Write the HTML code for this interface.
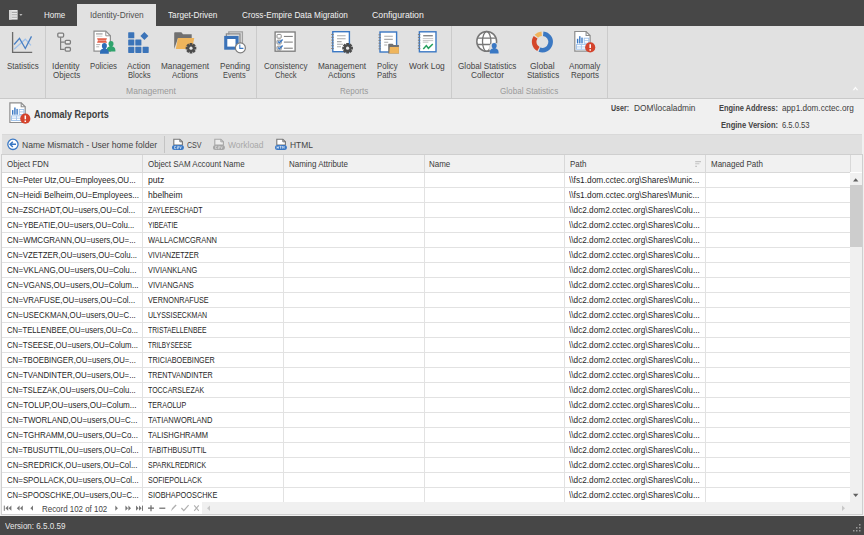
<!DOCTYPE html>
<html><head><meta charset="utf-8">
<style>
html,body{margin:0;padding:0}
body{width:864px;height:535px;position:relative;overflow:hidden;background:#f0f0f0;font-family:"Liberation Sans",sans-serif}
.a{position:absolute}
.t{position:absolute;white-space:pre;line-height:12px;transform-origin:0 50%}
svg{position:absolute;overflow:visible}
</style></head><body>
<!-- top bar -->
<div class="a" style="left:0;top:0;width:864px;height:26px;background:#474747"></div>
<div class="a" style="left:77px;top:4px;width:79px;height:22px;background:#e1e1e1"></div>
<!-- ribbon -->
<div class="a" style="left:0;top:26px;width:864px;height:72px;background:#e1e1e1"></div>
<div class="a" style="left:0;top:98px;width:864px;height:1px;background:#c9c9c9"></div>
<div class="a" style="left:45px;top:26px;width:1px;height:72px;background:#cbcbcb"></div>
<div class="a" style="left:256px;top:26px;width:1px;height:72px;background:#cbcbcb"></div>
<div class="a" style="left:451px;top:26px;width:1px;height:72px;background:#cbcbcb"></div>
<div class="a" style="left:607px;top:26px;width:1px;height:72px;background:#cbcbcb"></div>
<!-- header panel -->
<div class="a" style="left:0;top:99px;width:864px;height:35px;background:#f0f0f0"></div>
<!-- toolbar -->
<div class="a" style="left:2px;top:134px;width:860px;height:20px;background:#e0e0e0"></div>
<div class="a" style="left:2px;top:134px;width:860px;height:1px;background:#d9d9d9"></div>
<div class="a" style="left:164px;top:136px;width:1px;height:17px;background:#c4c4c4"></div>
<!-- grid -->
<div class="a" style="left:1px;top:154px;width:862px;height:361px;background:#ffffff;box-sizing:border-box;border:1px solid #cfcfcf"></div>
<div class="a" style="left:2px;top:155px;width:848px;height:17px;background:#f1f1f1"></div>
<div class="a" style="left:850px;top:155px;width:12px;height:17px;background:#f1f1f1"></div>
<div class="a" style="left:2px;top:172px;width:848px;height:1px;background:#d8d8d8"></div>
<div id="rowlines"></div>
<div class="a" style="left:142px;top:155px;width:1px;height:17px;background:#d8d8d8"></div>
<div class="a" style="left:142px;top:173px;width:1px;height:329px;background:#e2e2e2"></div>
<div class="a" style="left:283px;top:155px;width:1px;height:17px;background:#d8d8d8"></div>
<div class="a" style="left:283px;top:173px;width:1px;height:329px;background:#e2e2e2"></div>
<div class="a" style="left:424px;top:155px;width:1px;height:17px;background:#d8d8d8"></div>
<div class="a" style="left:424px;top:173px;width:1px;height:329px;background:#e2e2e2"></div>
<div class="a" style="left:564px;top:155px;width:1px;height:17px;background:#d8d8d8"></div>
<div class="a" style="left:564px;top:173px;width:1px;height:329px;background:#e2e2e2"></div>
<div class="a" style="left:705px;top:155px;width:1px;height:17px;background:#d8d8d8"></div>
<div class="a" style="left:705px;top:173px;width:1px;height:329px;background:#e2e2e2"></div>
<div class="a" style="left:850px;top:155px;width:1px;height:17px;background:#d8d8d8"></div>
<div class="a" style="left:2px;top:187px;width:848px;height:1px;background:#e2e2e2"></div>
<div class="a" style="left:2px;top:202px;width:848px;height:1px;background:#e2e2e2"></div>
<div class="a" style="left:2px;top:217px;width:848px;height:1px;background:#e2e2e2"></div>
<div class="a" style="left:2px;top:232px;width:848px;height:1px;background:#e2e2e2"></div>
<div class="a" style="left:2px;top:247px;width:848px;height:1px;background:#e2e2e2"></div>
<div class="a" style="left:2px;top:262px;width:848px;height:1px;background:#e2e2e2"></div>
<div class="a" style="left:2px;top:277px;width:848px;height:1px;background:#e2e2e2"></div>
<div class="a" style="left:2px;top:292px;width:848px;height:1px;background:#e2e2e2"></div>
<div class="a" style="left:2px;top:307px;width:848px;height:1px;background:#e2e2e2"></div>
<div class="a" style="left:2px;top:322px;width:848px;height:1px;background:#e2e2e2"></div>
<div class="a" style="left:2px;top:337px;width:848px;height:1px;background:#e2e2e2"></div>
<div class="a" style="left:2px;top:352px;width:848px;height:1px;background:#e2e2e2"></div>
<div class="a" style="left:2px;top:367px;width:848px;height:1px;background:#e2e2e2"></div>
<div class="a" style="left:2px;top:382px;width:848px;height:1px;background:#e2e2e2"></div>
<div class="a" style="left:2px;top:397px;width:848px;height:1px;background:#e2e2e2"></div>
<div class="a" style="left:2px;top:412px;width:848px;height:1px;background:#e2e2e2"></div>
<div class="a" style="left:2px;top:427px;width:848px;height:1px;background:#e2e2e2"></div>
<div class="a" style="left:2px;top:442px;width:848px;height:1px;background:#e2e2e2"></div>
<div class="a" style="left:2px;top:457px;width:848px;height:1px;background:#e2e2e2"></div>
<div class="a" style="left:2px;top:472px;width:848px;height:1px;background:#e2e2e2"></div>
<div class="a" style="left:2px;top:487px;width:848px;height:1px;background:#e2e2e2"></div>
<!-- scrollbar -->
<div class="a" style="left:850px;top:173px;width:12px;height:329px;background:#f0f0f0"></div>
<div class="a" style="left:850px;top:185px;width:12px;height:62px;background:#cdcdcd"></div>
<!-- navigator -->
<div class="a" style="left:2px;top:502px;width:200px;height:12px;background:#ffffff"></div>
<div class="a" style="left:202px;top:502px;width:660px;height:12px;background:#f0f0f0"></div>
<!-- status bar -->
<div class="a" style="left:0;top:516px;width:864px;height:19px;background:#474747"></div>
<svg width="864" height="535" viewBox="0 0 864 535" style="left:0;top:0">
<defs>
<g id="gear"><path d="M-1.37 -3.65 L-1.41 -5.32 L1.41 -5.32 L1.37 -3.65 L1.61 -3.55 L2.76 -4.76 L4.76 -2.76 L3.55 -1.61 L3.65 -1.37 L5.32 -1.41 L5.32 1.41 L3.65 1.37 L3.55 1.61 L4.76 2.76 L2.76 4.76 L1.61 3.55 L1.37 3.65 L1.41 5.32 L-1.41 5.32 L-1.37 3.65 L-1.61 3.55 L-2.76 4.76 L-4.76 2.76 L-3.55 1.61 L-3.65 1.37 L-5.32 1.41 L-5.32 -1.41 L-3.65 -1.37 L-3.55 -1.61 L-4.76 -2.76 L-2.76 -4.76 L-1.61 -3.55Z" fill="#4b4b4b"/><circle r="1.6" fill="#e8e8e8"/></g>
<g id="person"><ellipse cx="0" cy="-3.3" rx="2.5" ry="2.8"/><path d="M-4.4 4.6V3.2C-4.4 .9-2.8 -.1-1.3 -.4V-1.2H1.3V-.4C2.8 -.1 4.4 .9 4.4 3.2V4.6z"/></g>
<g id="anom">
 <path d="M574.8 31.5h11.3l4 4v15.7h-15.3z" fill="#fff" stroke="#8c8c8c" stroke-width="1.2"/>
 <path d="M586.1 31.5v4h4" fill="none" stroke="#8c8c8c" stroke-width="1.1"/>
 <rect x="576.9" y="38.8" width="1.4" height="4.6" fill="#3a78c4"/>
 <rect x="579.1" y="36.2" width="1.4" height="7.2" fill="#3a78c4"/>
 <rect x="581.3" y="37.6" width="1.4" height="5.8" fill="#3a78c4"/>
 <rect x="584.2" y="38.2" width="4.6" height="5" fill="none" stroke="#9cc0ea" stroke-width="0.9"/>
 <path d="M584.2 40.6h4.6" stroke="#9cc0ea" stroke-width="0.8"/>
 <rect x="576.4" y="44.6" width="10" height="4.6" fill="none" stroke="#9cc0ea" stroke-width="0.9"/>
 <path d="M576.4 46.9h10M581.4 44.6v4.6" stroke="#9cc0ea" stroke-width="0.8"/>
 <circle cx="590.2" cy="47.4" r="5.1" fill="#d4432c"/>
 <path d="M590.2 44.2v3.8" stroke="#fff" stroke-width="1.5"/>
 <rect x="589.45" y="49.2" width="1.5" height="1.5" fill="#fff"/>
</g>
<g id="nbook">
 <rect x="0" y="0" width="16.6" height="20" fill="#fff" stroke="#3b78c4" stroke-width="1.4"/>
 <path d="M-1.5 2.8h2.4M-1.5 5.6h2.4M-1.5 8.4h2.4M-1.5 11.2h2.4M-1.5 14h2.4M-1.5 16.8h2.4" stroke="#7c7c7c" stroke-width="1"/>
</g>
<g id="csvdoc">
 <path d="M0.6 0.6h6l2.6 2.6v3.2h-8.6z" fill="#fff" stroke="#777" stroke-width="1.1"/>
 <path d="M6.6 0.6v2.6h2.6" fill="none" stroke="#777" stroke-width="1"/>
</g>
</defs>

<!-- app menu -->
<rect x="9" y="10" width="8.6" height="9.6" fill="#e8e8e8"/>
<rect x="9" y="10" width="2.6" height="9.6" fill="#d6d6d6"/>
<path d="M11.8 12.4h5.6M11.8 14.8h5.6M11.8 17.2h5.6" stroke="#a9a9a9" stroke-width="1.1"/>
<path d="M19.3 14h3.2l-1.6 2z" fill="#b9b9b9"/>

<!-- Statistics -->
<path d="M12.6 32v20.4h19.6" fill="none" stroke="#6b6b6b" stroke-width="1.3"/>
<polyline points="14.1,49.3 25.3,39.2 31,45.4" fill="none" stroke="#9fc2ec" stroke-width="1.2"/>
<polyline points="14.1,44.5 19.5,38.4 25.3,48.5 31.5,36.4" fill="none" stroke="#4a80c4" stroke-width="1.3"/>

<!-- Identity Objects -->
<path d="M60.6 37.2V49.3H64.6M60.6 42.1H64.6" fill="none" stroke="#7d7d7d" stroke-width="1.2"/>
<rect x="57.8" y="33.1" width="5.8" height="4" rx="1" fill="#eaeaea" stroke="#7d7d7d" stroke-width="1.3"/>
<rect x="65.2" y="40.3" width="5.2" height="3.7" rx="1" fill="#eaeaea" stroke="#7d7d7d" stroke-width="1.3"/>
<rect x="65.2" y="47.5" width="5.2" height="3.6" rx="1" fill="#eaeaea" stroke="#7d7d7d" stroke-width="1.3"/>

<!-- Policies -->
<path d="M94 31.2h11.8l4.6 4.6v15.4h-16.4z" fill="#fff" stroke="#8f8f8f" stroke-width="1.2"/>
<path d="M105.8 31.2v4.6h4.6" fill="none" stroke="#8f8f8f" stroke-width="1"/>
<path d="M96 33.9h6.6" stroke="#a6a6a6" stroke-width="1.3"/>
<path d="M96.4 36.2h6" stroke="#c4c4c4" stroke-width="0.8"/>
<path d="M97 38.2h10l-1 2.2 1 2.3h-10l1-2.3z" fill="#e3604a"/>
<path d="M98.2 40.4h7.6" stroke="#f2aa9c" stroke-width="0.9"/>
<path d="M96.2 44.6h4M96.2 46.8h3" stroke="#a8a8a8" stroke-width="0.9"/>
<use href="#person" transform="translate(111,47)" fill="#2fa36d"/>
<use href="#person" transform="translate(104.4,49.2)" fill="#2e6db7"/>

<!-- Action Blocks -->
<g fill="#3b74b9">
<rect x="128.2" y="32.2" width="6.1" height="6.1" rx="0.6"/>
<rect x="128.2" y="39.5" width="6.1" height="6.1" rx="0.6"/>
<rect x="135.3" y="39.5" width="6.1" height="6.1" rx="0.6"/>
<rect x="128.2" y="46.8" width="6.1" height="6.1" rx="0.6"/>
<rect x="135.3" y="46.8" width="6.1" height="6.1" rx="0.6"/>
<rect x="142.6" y="46.8" width="6.1" height="6.1" rx="0.6"/>
<path d="M144.4 31.9l4 4-4 4-4-4z"/>
</g>

<!-- Management Actions (folder + gear) -->
<path d="M174.2 49V33.3c0-.6.4-1.1 1-1.1h6.2l1.6 2.1h8.7v4H178z" fill="#707070"/>
<path d="M177.9 38h16.4l-2.3 11h-16.2z" fill="#eeb45b"/>
<use href="#gear" transform="translate(191,48.2)"/>

<!-- Pending Events -->
<path d="M228.8 34.4V31.8h13.6V44.2" fill="none" stroke="#a0a0a0" stroke-width="1.3"/>
<path d="M226.4 36.4V33.9h13.6V46.2" fill="none" stroke="#8c8c8c" stroke-width="1.3"/>
<rect x="224.2" y="35.9" width="14.4" height="13.8" fill="#3a72b8"/>
<rect x="227.3" y="39" width="8.2" height="7.6" fill="#fff"/>
<circle cx="240.4" cy="47.9" r="5" fill="#fff" stroke="#7c7c7c" stroke-width="1.2"/>
<path d="M239.8 44.5v3.9h3.6" fill="none" stroke="#3a78c4" stroke-width="1.1"/>
<!-- Consistency Check -->
<rect x="275.1" y="32" width="20" height="19.2" fill="#fff" stroke="#7b7b7b" stroke-width="1.3"/>
<rect x="277" y="34.4" width="4.2" height="3.8" rx="0.8" fill="#fff" stroke="#8a8a8a" stroke-width="1"/>
<rect x="277" y="40.2" width="4.2" height="3.8" rx="0.8" fill="#fff" stroke="#8a8a8a" stroke-width="1"/>
<rect x="277" y="46.2" width="4.2" height="3.8" rx="0.8" fill="#fff" stroke="#8a8a8a" stroke-width="1"/>
<path d="M278 41.4l1.4 1.4 3.2-3.4M278 47.4l1.4 1.4 3.2-3.4" fill="none" stroke="#3a78c4" stroke-width="1.4"/>
<path d="M283.9 36.4h8.9M283.9 42.1h8.9M283.9 48.2h8.9" stroke="#777" stroke-width="1"/>

<!-- Management Actions (notebook + gear) -->
<use href="#nbook" transform="translate(332.8,31.7)"/>
<path d="M337 35.7h8.6M337 38.8h8.6M337 41.6h4.6M337 44.2h6M337 46.8h4" stroke="#a9a9a9" stroke-width="1.1"/>
<use href="#gear" transform="translate(347.6,48.2)"/>

<!-- Policy Paths -->
<use href="#nbook" transform="translate(380,32)"/>
<path d="M384.2 36.3h8.6M384.2 39.4h8.6M384.2 42.3h4M384.2 45h3" stroke="#a9a9a9" stroke-width="1.1"/>
<path d="M388.2 53.6V44.6c0-.5.3-.9.8-.9h3.6l1.1 1.3h5.2v8.6z" fill="#717171"/>
<path d="M389.8 47h9.1v6.6h-9.6z" fill="#efb55c"/>

<!-- Work Log -->
<use href="#nbook" transform="translate(419.4,31.8)"/>
<path d="M423.2 35.7h9.6" stroke="#888" stroke-width="1.4"/>
<path d="M422.8 38.6h10.4M422.8 40.6h10.4M422.8 42.2h5.6" stroke="#bdbdbd" stroke-width="0.9"/>
<polyline points="423.3,48.9 426.3,45.6 428.4,48.3 432.8,44" fill="none" stroke="#25a05e" stroke-width="1.5"/>

<!-- Global Statistics Collector -->
<circle cx="486.7" cy="41.4" r="9.9" fill="#fff" stroke="#777" stroke-width="1.5"/>
<ellipse cx="486.7" cy="41.4" rx="4.2" ry="9.9" fill="none" stroke="#777" stroke-width="1.3"/>
<path d="M477.6 38.2h18.2M477.6 44.5h18.2" stroke="#777" stroke-width="1.3"/>
<circle cx="494.2" cy="47.8" r="5.2" fill="#e1e1e1"/>
<use href="#person" transform="translate(494.2,49)" fill="#3a78c4"/>

<!-- Global Statistics donut -->
<g fill="none" stroke-width="4.6">
<path d="M543.2 33.7 A8.25 8.25 0 1 1 539.4 49.6" stroke="#3b78c2"/>
<path d="M538.4 49.1 A8.25 8.25 0 0 1 535.6 37.2" stroke="#d4472a"/>
<path d="M536.3 36.3 A8.25 8.25 0 0 1 541.7 33.7" stroke="#f0b45c"/>
</g>

<!-- Anomaly Reports -->
<use href="#anom"/>
<use href="#anom" transform="translate(-564.9,71.3)"/>

<!-- collapse ribbon -->
<path d="M852.6 90.2l2.85-3.6 2.85 3.6h-1.6l-1.25-1.6-1.25 1.6z" fill="#fbfbfb"/>

<!-- toolbar back -->
<circle cx="12.95" cy="144.35" r="5.15" fill="#fff" stroke="#3a78c4" stroke-width="1.3"/>
<path d="M16 144.35H10.2M12.8 141.7l-2.7 2.65 2.7 2.65" fill="none" stroke="#3a78c4" stroke-width="1.5"/>
<!-- CSV -->
<use href="#csvdoc" transform="translate(173.2,138.6)"/>
<rect x="172" y="145.1" width="11.9" height="5" rx="2.5" fill="#3a78c4"/>
<path d="M174.6 146.3h1.6M174.6 146.3v2.4h1.6M177.2 146.3h1.4v1.2h-1.4v1.2h1.4M179.7 146.3l.8 2.4.8-2.4" fill="none" stroke="#fff" stroke-width="0.6"/>
<!-- Workload (disabled) -->
<path d="M214.8 139.2h6l2.6 2.6v3.2h-8.6z" fill="#ececec" stroke="#a8a8a8" stroke-width="1.1"/>
<path d="M220.8 139.2v2.6h2.6" fill="none" stroke="#a8a8a8" stroke-width="1"/>
<rect x="213" y="145.1" width="11.9" height="5" rx="2.5" fill="#a6a6a6"/>
<path d="M215.6 146.3h1.6M215.6 146.3v2.4h1.6M218.2 146.3h1.4v1.2h-1.4v1.2h1.4M220.7 146.3l.8 2.4.8-2.4" fill="none" stroke="#e8e8e8" stroke-width="0.6"/>
<!-- HTML -->
<use href="#csvdoc" transform="translate(276.2,138.6)"/>
<rect x="275" y="145.1" width="11.9" height="5" rx="2.5" fill="#3a78c4"/>
<path d="M277 146.3v2.4M277 147.5h1.4M278.4 146.3v2.4M279.5 146.3h2M280.5 146.3v2.4M282.3 148.7v-2.4l.9 1.2.9-1.2v2.4" fill="none" stroke="#fff" stroke-width="0.6"/>

<!-- filter icon -->
<path d="M695.2 161.6h5.8M695.2 163.8h4.2M695.2 166.4h1.8" stroke="#c4c4c4" stroke-width="1.1"/>

<!-- scroll arrows -->
<path d="M853 181.5h5.4l-2.7-3.3z" fill="#606060"/>
<path d="M853 493.8h5.4l-2.7 3.3z" fill="#606060"/>
<path d="M210 505.5v5.4l-3-2.7z" fill="#c8c8c8"/>
<path d="M842 505.5v5.4l3-2.7z" fill="#c8c8c8"/>

<!-- navigator icons -->
<g fill="#777">
<rect x="3.8" y="505.6" width="1" height="5.2"/>
<path d="M8.2 505.6v5.2l-2.8-2.6z M11.4 505.6v5.2l-2.8-2.6z"/>
<path d="M19.6 505.6v5.2l-2.8-2.6z M22.8 505.6v5.2l-2.8-2.6z"/>
<path d="M33 505.6v5.2l-2.6-2.6z"/>
<path d="M115.3 505.6v5.2l2.6-2.6z"/>
<path d="M125.4 505.6v5.2l2.6-2.6z M128.4 505.6v5.2l2.6-2.6z"/>
<path d="M136 505.6v5.2l2.6-2.6z M139 505.6v5.2l2.6-2.6z"/>
<rect x="142" y="505.6" width="1" height="5.2"/>
</g>
<path d="M148 508.2h6M151 505.2v6" stroke="#6a6a6a" stroke-width="1.2"/>
<path d="M159.3 508.2h6" stroke="#6a6a6a" stroke-width="1.2"/>
<path d="M171 511.2l1-3 3.6-3.6 1 1-3.6 3.6z" fill="#b0b0b0"/>
<path d="M181.4 508l2.4 2.6 4.8-5.4" fill="none" stroke="#b0b0b0" stroke-width="1.2"/>
<path d="M194.2 505.4l4.6 5.4M198.8 505.4l-4.6 5.4" stroke="#b0b0b0" stroke-width="1.1"/>

<!-- resize grip -->
<g fill="#9a9a9a">
<rect x="859" y="524" width="1.5" height="1.5"/>
<rect x="856" y="527" width="1.5" height="1.5"/><rect x="859" y="527" width="1.5" height="1.5"/>
<rect x="853" y="530" width="1.5" height="1.5"/><rect x="856" y="530" width="1.5" height="1.5"/><rect x="859" y="530" width="1.5" height="1.5"/>
</g>
</svg>

<div class="t" style="left:43.70px;top:8.90px;font-size:9px;color:#f2f2f2;transform:scaleX(0.8869)">Home</div>
<div class="t" style="left:89.60px;top:8.90px;font-size:9px;color:#505050;transform:scaleX(0.9254)">Identity-Driven</div>
<div class="t" style="left:168.00px;top:8.90px;font-size:9px;color:#f2f2f2;transform:scaleX(0.9143)">Target-Driven</div>
<div class="t" style="left:241.60px;top:8.90px;font-size:9px;color:#f2f2f2;transform:scaleX(0.9117)">Cross-Empire Data Migration</div>
<div class="t" style="left:371.70px;top:8.90px;font-size:9px;color:#f2f2f2;transform:scaleX(0.9674)">Configuration</div>
<div class="t" style="left:6.60px;top:59.80px;font-size:9px;color:#454545;transform:scaleX(0.8830)">Statistics</div>
<div class="t" style="left:52.40px;top:59.80px;font-size:9px;color:#454545;transform:scaleX(0.9507)">Identity</div>
<div class="t" style="left:52.60px;top:69.30px;font-size:9px;color:#454545;transform:scaleX(0.8913)">Objects</div>
<div class="t" style="left:90.30px;top:59.80px;font-size:9px;color:#454545;transform:scaleX(0.8705)">Policies</div>
<div class="t" style="left:127.30px;top:59.80px;font-size:9px;color:#454545;transform:scaleX(0.9274)">Action</div>
<div class="t" style="left:127.60px;top:69.30px;font-size:9px;color:#454545;transform:scaleX(0.8523)">Blocks</div>
<div class="t" style="left:161.00px;top:59.80px;font-size:9px;color:#454545;transform:scaleX(0.9135)">Management</div>
<div class="t" style="left:171.90px;top:69.30px;font-size:9px;color:#454545;transform:scaleX(0.8843)">Actions</div>
<div class="t" style="left:219.70px;top:59.80px;font-size:9px;color:#454545;transform:scaleX(0.9082)">Pending</div>
<div class="t" style="left:223.40px;top:69.30px;font-size:9px;color:#454545;transform:scaleX(0.8214)">Events</div>
<div class="t" style="left:263.90px;top:59.80px;font-size:9px;color:#454545;transform:scaleX(0.8872)">Consistency</div>
<div class="t" style="left:274.80px;top:69.30px;font-size:9px;color:#454545;transform:scaleX(0.8426)">Check</div>
<div class="t" style="left:317.60px;top:59.80px;font-size:9px;color:#454545;transform:scaleX(0.9154)">Management</div>
<div class="t" style="left:328.00px;top:69.30px;font-size:9px;color:#454545;transform:scaleX(0.9148)">Actions</div>
<div class="t" style="left:376.90px;top:59.80px;font-size:9px;color:#454545;transform:scaleX(0.8578)">Policy</div>
<div class="t" style="left:377.30px;top:69.30px;font-size:9px;color:#454545;transform:scaleX(0.8559)">Paths</div>
<div class="t" style="left:408.60px;top:59.80px;font-size:9px;color:#454545;transform:scaleX(0.9333)">Work Log</div>
<div class="t" style="left:458.30px;top:59.80px;font-size:9px;color:#454545;transform:scaleX(0.9050)">Global Statistics</div>
<div class="t" style="left:471.00px;top:69.30px;font-size:9px;color:#454545;transform:scaleX(0.9292)">Collector</div>
<div class="t" style="left:530.00px;top:59.80px;font-size:9px;color:#454545;transform:scaleX(0.9456)">Global</div>
<div class="t" style="left:526.50px;top:69.30px;font-size:9px;color:#454545;transform:scaleX(0.8941)">Statistics</div>
<div class="t" style="left:569.00px;top:59.80px;font-size:9px;color:#454545;transform:scaleX(0.8967)">Anomaly</div>
<div class="t" style="left:570.60px;top:69.30px;font-size:9px;color:#454545;transform:scaleX(0.8916)">Reports</div>
<div class="t" style="left:126.00px;top:84.50px;font-size:9px;color:#9a9a9a;transform:scaleX(0.9515)">Management</div>
<div class="t" style="left:339.80px;top:84.80px;font-size:9px;color:#9a9a9a;transform:scaleX(0.8948)">Reports</div>
<div class="t" style="left:499.80px;top:84.70px;font-size:9px;color:#9a9a9a;transform:scaleX(0.9019)">Global Statistics</div>
<div class="t" style="left:33.70px;top:108.00px;font-size:11px;color:#3c3c3c;transform:scaleX(0.8202);font-weight:700">Anomaly Reports</div>
<div class="t" style="left:611.00px;top:101.50px;font-size:9px;color:#444;transform:scaleX(0.7821);font-weight:700">User:</div>
<div class="t" style="left:633.60px;top:101.50px;font-size:9px;color:#3d3d3d;transform:scaleX(0.9229)">DOM\localadmin</div>
<div class="t" style="left:718.90px;top:101.50px;font-size:9px;color:#444;transform:scaleX(0.8274);font-weight:700">Engine Address:</div>
<div class="t" style="left:782.00px;top:101.50px;font-size:9px;color:#3d3d3d;transform:scaleX(0.9083)">app1.dom.cctec.org</div>
<div class="t" style="left:720.70px;top:118.80px;font-size:9px;color:#444;transform:scaleX(0.8395);font-weight:700">Engine Version:</div>
<div class="t" style="left:782.00px;top:118.80px;font-size:9px;color:#3d3d3d;transform:scaleX(0.8484)">6.5.0.53</div>
<div class="t" style="left:21.90px;top:139.30px;font-size:9.5px;color:#444;transform:scaleX(0.9004)">Name Mismatch - User home folder</div>
<div class="t" style="left:186.90px;top:139.30px;font-size:9.5px;color:#444;transform:scaleX(0.7469)">CSV</div>
<div class="t" style="left:227.50px;top:139.30px;font-size:9.5px;color:#a8a8a8;transform:scaleX(0.8885)">Workload</div>
<div class="t" style="left:289.60px;top:139.30px;font-size:9.5px;color:#444;transform:scaleX(0.8850)">HTML</div>
<div class="t" style="left:6.60px;top:157.80px;font-size:9px;color:#3a3a3a;transform:scaleX(0.8860)">Object FDN</div>
<div class="t" style="left:147.80px;top:157.80px;font-size:9px;color:#3a3a3a;transform:scaleX(0.8860)">Object SAM Account Name</div>
<div class="t" style="left:288.50px;top:157.80px;font-size:9px;color:#3a3a3a;transform:scaleX(0.8860)">Naming Attribute</div>
<div class="t" style="left:429.30px;top:157.80px;font-size:9px;color:#3a3a3a;transform:scaleX(0.8860)">Name</div>
<div class="t" style="left:570.00px;top:157.80px;font-size:9px;color:#3a3a3a;transform:scaleX(0.8860)">Path</div>
<div class="t" style="left:710.50px;top:157.80px;font-size:9px;color:#3a3a3a;transform:scaleX(0.8860)">Managed Path</div>
<div class="t" style="left:6.60px;top:174.00px;font-size:9px;color:#1f1f1f;transform:scaleX(0.8880)">CN=Peter Utz,OU=Employees,OU...</div>
<div class="t" style="left:147.80px;top:174.00px;font-size:9px;color:#1f1f1f;transform:scaleX(0.9579)">putz</div>
<div class="t" style="left:569.20px;top:174.00px;font-size:9px;color:#1f1f1f;transform:scaleX(0.9244)">\\fs1.dom.cctec.org\Shares\Munic...</div>
<div class="t" style="left:6.60px;top:189.00px;font-size:9px;color:#1f1f1f;transform:scaleX(0.8969)">CN=Heidi Belheim,OU=Employees...</div>
<div class="t" style="left:147.80px;top:189.00px;font-size:9px;color:#1f1f1f;transform:scaleX(0.9444)">hbelheim</div>
<div class="t" style="left:569.20px;top:189.00px;font-size:9px;color:#1f1f1f;transform:scaleX(0.9244)">\\fs1.dom.cctec.org\Shares\Munic...</div>
<div class="t" style="left:6.60px;top:204.00px;font-size:9px;color:#1f1f1f;transform:scaleX(0.8823)">CN=ZSCHADT,OU=users,OU=Col...</div>
<div class="t" style="left:147.80px;top:204.00px;font-size:9px;color:#1f1f1f;transform:scaleX(0.7691)">ZAYLEESCHADT</div>
<div class="t" style="left:569.20px;top:204.00px;font-size:9px;color:#1f1f1f;transform:scaleX(0.9142)">\\dc2.dom2.cctec.org\Shares\Colu...</div>
<div class="t" style="left:6.60px;top:219.00px;font-size:9px;color:#1f1f1f;transform:scaleX(0.8711)">CN=YBEATIE,OU=users,OU=Colu...</div>
<div class="t" style="left:147.80px;top:219.00px;font-size:9px;color:#1f1f1f;transform:scaleX(0.7476)">YIBEATIE</div>
<div class="t" style="left:569.20px;top:219.00px;font-size:9px;color:#1f1f1f;transform:scaleX(0.9142)">\\dc2.dom2.cctec.org\Shares\Colu...</div>
<div class="t" style="left:6.60px;top:234.00px;font-size:9px;color:#1f1f1f;transform:scaleX(0.8866)">CN=WMCGRANN,OU=users,OU=...</div>
<div class="t" style="left:147.80px;top:234.00px;font-size:9px;color:#1f1f1f;transform:scaleX(0.8295)">WALLACMCGRANN</div>
<div class="t" style="left:569.20px;top:234.00px;font-size:9px;color:#1f1f1f;transform:scaleX(0.9142)">\\dc2.dom2.cctec.org\Shares\Colu...</div>
<div class="t" style="left:6.60px;top:249.00px;font-size:9px;color:#1f1f1f;transform:scaleX(0.8678)">CN=VZETZER,OU=users,OU=Colu...</div>
<div class="t" style="left:147.80px;top:249.00px;font-size:9px;color:#1f1f1f;transform:scaleX(0.7874)">VIVIANZETZER</div>
<div class="t" style="left:569.20px;top:249.00px;font-size:9px;color:#1f1f1f;transform:scaleX(0.9142)">\\dc2.dom2.cctec.org\Shares\Colu...</div>
<div class="t" style="left:6.60px;top:264.00px;font-size:9px;color:#1f1f1f;transform:scaleX(0.8912)">CN=VKLANG,OU=users,OU=Colu...</div>
<div class="t" style="left:147.80px;top:264.00px;font-size:9px;color:#1f1f1f;transform:scaleX(0.8212)">VIVIANKLANG</div>
<div class="t" style="left:569.20px;top:264.00px;font-size:9px;color:#1f1f1f;transform:scaleX(0.9142)">\\dc2.dom2.cctec.org\Shares\Colu...</div>
<div class="t" style="left:6.60px;top:279.00px;font-size:9px;color:#1f1f1f;transform:scaleX(0.8904)">CN=VGANS,OU=users,OU=Colum...</div>
<div class="t" style="left:147.80px;top:279.00px;font-size:9px;color:#1f1f1f;transform:scaleX(0.8325)">VIVIANGANS</div>
<div class="t" style="left:569.20px;top:279.00px;font-size:9px;color:#1f1f1f;transform:scaleX(0.9142)">\\dc2.dom2.cctec.org\Shares\Colu...</div>
<div class="t" style="left:6.60px;top:294.00px;font-size:9px;color:#1f1f1f;transform:scaleX(0.8763)">CN=VRAFUSE,OU=users,OU=Col...</div>
<div class="t" style="left:147.80px;top:294.00px;font-size:9px;color:#1f1f1f;transform:scaleX(0.8092)">VERNONRAFUSE</div>
<div class="t" style="left:569.20px;top:294.00px;font-size:9px;color:#1f1f1f;transform:scaleX(0.9142)">\\dc2.dom2.cctec.org\Shares\Colu...</div>
<div class="t" style="left:6.60px;top:309.00px;font-size:9px;color:#1f1f1f;transform:scaleX(0.8715)">CN=USECKMAN,OU=users,OU=C...</div>
<div class="t" style="left:147.80px;top:309.00px;font-size:9px;color:#1f1f1f;transform:scaleX(0.7804)">ULYSSISECKMAN</div>
<div class="t" style="left:569.20px;top:309.00px;font-size:9px;color:#1f1f1f;transform:scaleX(0.9142)">\\dc2.dom2.cctec.org\Shares\Colu...</div>
<div class="t" style="left:6.60px;top:324.00px;font-size:9px;color:#1f1f1f;transform:scaleX(0.8517)">CN=TELLENBEE,OU=users,OU=Co...</div>
<div class="t" style="left:147.80px;top:324.00px;font-size:9px;color:#1f1f1f;transform:scaleX(0.7514)">TRISTAELLENBEE</div>
<div class="t" style="left:569.20px;top:324.00px;font-size:9px;color:#1f1f1f;transform:scaleX(0.9142)">\\dc2.dom2.cctec.org\Shares\Colu...</div>
<div class="t" style="left:6.60px;top:339.00px;font-size:9px;color:#1f1f1f;transform:scaleX(0.8630)">CN=TSEESE,OU=users,OU=Colum...</div>
<div class="t" style="left:147.80px;top:339.00px;font-size:9px;color:#1f1f1f;transform:scaleX(0.7102)">TRILBYSEESE</div>
<div class="t" style="left:569.20px;top:339.00px;font-size:9px;color:#1f1f1f;transform:scaleX(0.9142)">\\dc2.dom2.cctec.org\Shares\Colu...</div>
<div class="t" style="left:6.60px;top:354.00px;font-size:9px;color:#1f1f1f;transform:scaleX(0.8627)">CN=TBOEBINGER,OU=users,OU=...</div>
<div class="t" style="left:147.80px;top:354.00px;font-size:9px;color:#1f1f1f;transform:scaleX(0.8047)">TRICIABOEBINGER</div>
<div class="t" style="left:569.20px;top:354.00px;font-size:9px;color:#1f1f1f;transform:scaleX(0.9142)">\\dc2.dom2.cctec.org\Shares\Colu...</div>
<div class="t" style="left:6.60px;top:369.00px;font-size:9px;color:#1f1f1f;transform:scaleX(0.8754)">CN=TVANDINTER,OU=users,OU=...</div>
<div class="t" style="left:147.80px;top:369.00px;font-size:9px;color:#1f1f1f;transform:scaleX(0.7954)">TRENTVANDINTER</div>
<div class="t" style="left:569.20px;top:369.00px;font-size:9px;color:#1f1f1f;transform:scaleX(0.9142)">\\dc2.dom2.cctec.org\Shares\Colu...</div>
<div class="t" style="left:6.60px;top:384.00px;font-size:9px;color:#1f1f1f;transform:scaleX(0.8655)">CN=TSLEZAK,OU=users,OU=Colu...</div>
<div class="t" style="left:147.80px;top:384.00px;font-size:9px;color:#1f1f1f;transform:scaleX(0.7753)">TOCCARSLEZAK</div>
<div class="t" style="left:569.20px;top:384.00px;font-size:9px;color:#1f1f1f;transform:scaleX(0.9142)">\\dc2.dom2.cctec.org\Shares\Colu...</div>
<div class="t" style="left:6.60px;top:399.00px;font-size:9px;color:#1f1f1f;transform:scaleX(0.8933)">CN=TOLUP,OU=users,OU=Colum...</div>
<div class="t" style="left:147.80px;top:399.00px;font-size:9px;color:#1f1f1f;transform:scaleX(0.7874)">TERAOLUP</div>
<div class="t" style="left:569.20px;top:399.00px;font-size:9px;color:#1f1f1f;transform:scaleX(0.9142)">\\dc2.dom2.cctec.org\Shares\Colu...</div>
<div class="t" style="left:6.60px;top:414.00px;font-size:9px;color:#1f1f1f;transform:scaleX(0.8794)">CN=TWORLAND,OU=users,OU=C...</div>
<div class="t" style="left:147.80px;top:414.00px;font-size:9px;color:#1f1f1f;transform:scaleX(0.8399)">TATIANWORLAND</div>
<div class="t" style="left:569.20px;top:414.00px;font-size:9px;color:#1f1f1f;transform:scaleX(0.9142)">\\dc2.dom2.cctec.org\Shares\Colu...</div>
<div class="t" style="left:6.60px;top:429.00px;font-size:9px;color:#1f1f1f;transform:scaleX(0.8835)">CN=TGHRAMM,OU=users,OU=Co...</div>
<div class="t" style="left:147.80px;top:429.00px;font-size:9px;color:#1f1f1f;transform:scaleX(0.8365)">TALISHGHRAMM</div>
<div class="t" style="left:569.20px;top:429.00px;font-size:9px;color:#1f1f1f;transform:scaleX(0.9142)">\\dc2.dom2.cctec.org\Shares\Colu...</div>
<div class="t" style="left:6.60px;top:444.00px;font-size:9px;color:#1f1f1f;transform:scaleX(0.8613)">CN=TBUSUTTIL,OU=users,OU=Col...</div>
<div class="t" style="left:147.80px;top:444.00px;font-size:9px;color:#1f1f1f;transform:scaleX(0.7816)">TABITHBUSUTTIL</div>
<div class="t" style="left:569.20px;top:444.00px;font-size:9px;color:#1f1f1f;transform:scaleX(0.9142)">\\dc2.dom2.cctec.org\Shares\Colu...</div>
<div class="t" style="left:6.60px;top:459.00px;font-size:9px;color:#1f1f1f;transform:scaleX(0.8676)">CN=SREDRICK,OU=users,OU=Col...</div>
<div class="t" style="left:147.80px;top:459.00px;font-size:9px;color:#1f1f1f;transform:scaleX(0.7723)">SPARKLREDRICK</div>
<div class="t" style="left:569.20px;top:459.00px;font-size:9px;color:#1f1f1f;transform:scaleX(0.9142)">\\dc2.dom2.cctec.org\Shares\Colu...</div>
<div class="t" style="left:6.60px;top:474.00px;font-size:9px;color:#1f1f1f;transform:scaleX(0.8697)">CN=SPOLLACK,OU=users,OU=Col...</div>
<div class="t" style="left:147.80px;top:474.00px;font-size:9px;color:#1f1f1f;transform:scaleX(0.7865)">SOFIEPOLLACK</div>
<div class="t" style="left:569.20px;top:474.00px;font-size:9px;color:#1f1f1f;transform:scaleX(0.9142)">\\dc2.dom2.cctec.org\Shares\Colu...</div>
<div class="t" style="left:6.60px;top:489.00px;font-size:9px;color:#1f1f1f;transform:scaleX(0.8557)">CN=SPOOSCHKE,OU=users,OU=C...</div>
<div class="t" style="left:147.80px;top:489.00px;font-size:9px;color:#1f1f1f;transform:scaleX(0.8150)">SIOBHAPOOSCHKE</div>
<div class="t" style="left:569.20px;top:489.00px;font-size:9px;color:#1f1f1f;transform:scaleX(0.9142)">\\dc2.dom2.cctec.org\Shares\Colu...</div>
<div class="t" style="left:42.00px;top:503.30px;font-size:9px;color:#444;transform:scaleX(0.8803)">Record 102 of 102</div>
<div class="t" style="left:4.90px;top:520.40px;font-size:9px;color:#e8e8e8;transform:scaleX(0.8940)">Version: 6.5.0.59</div>
</body></html>
